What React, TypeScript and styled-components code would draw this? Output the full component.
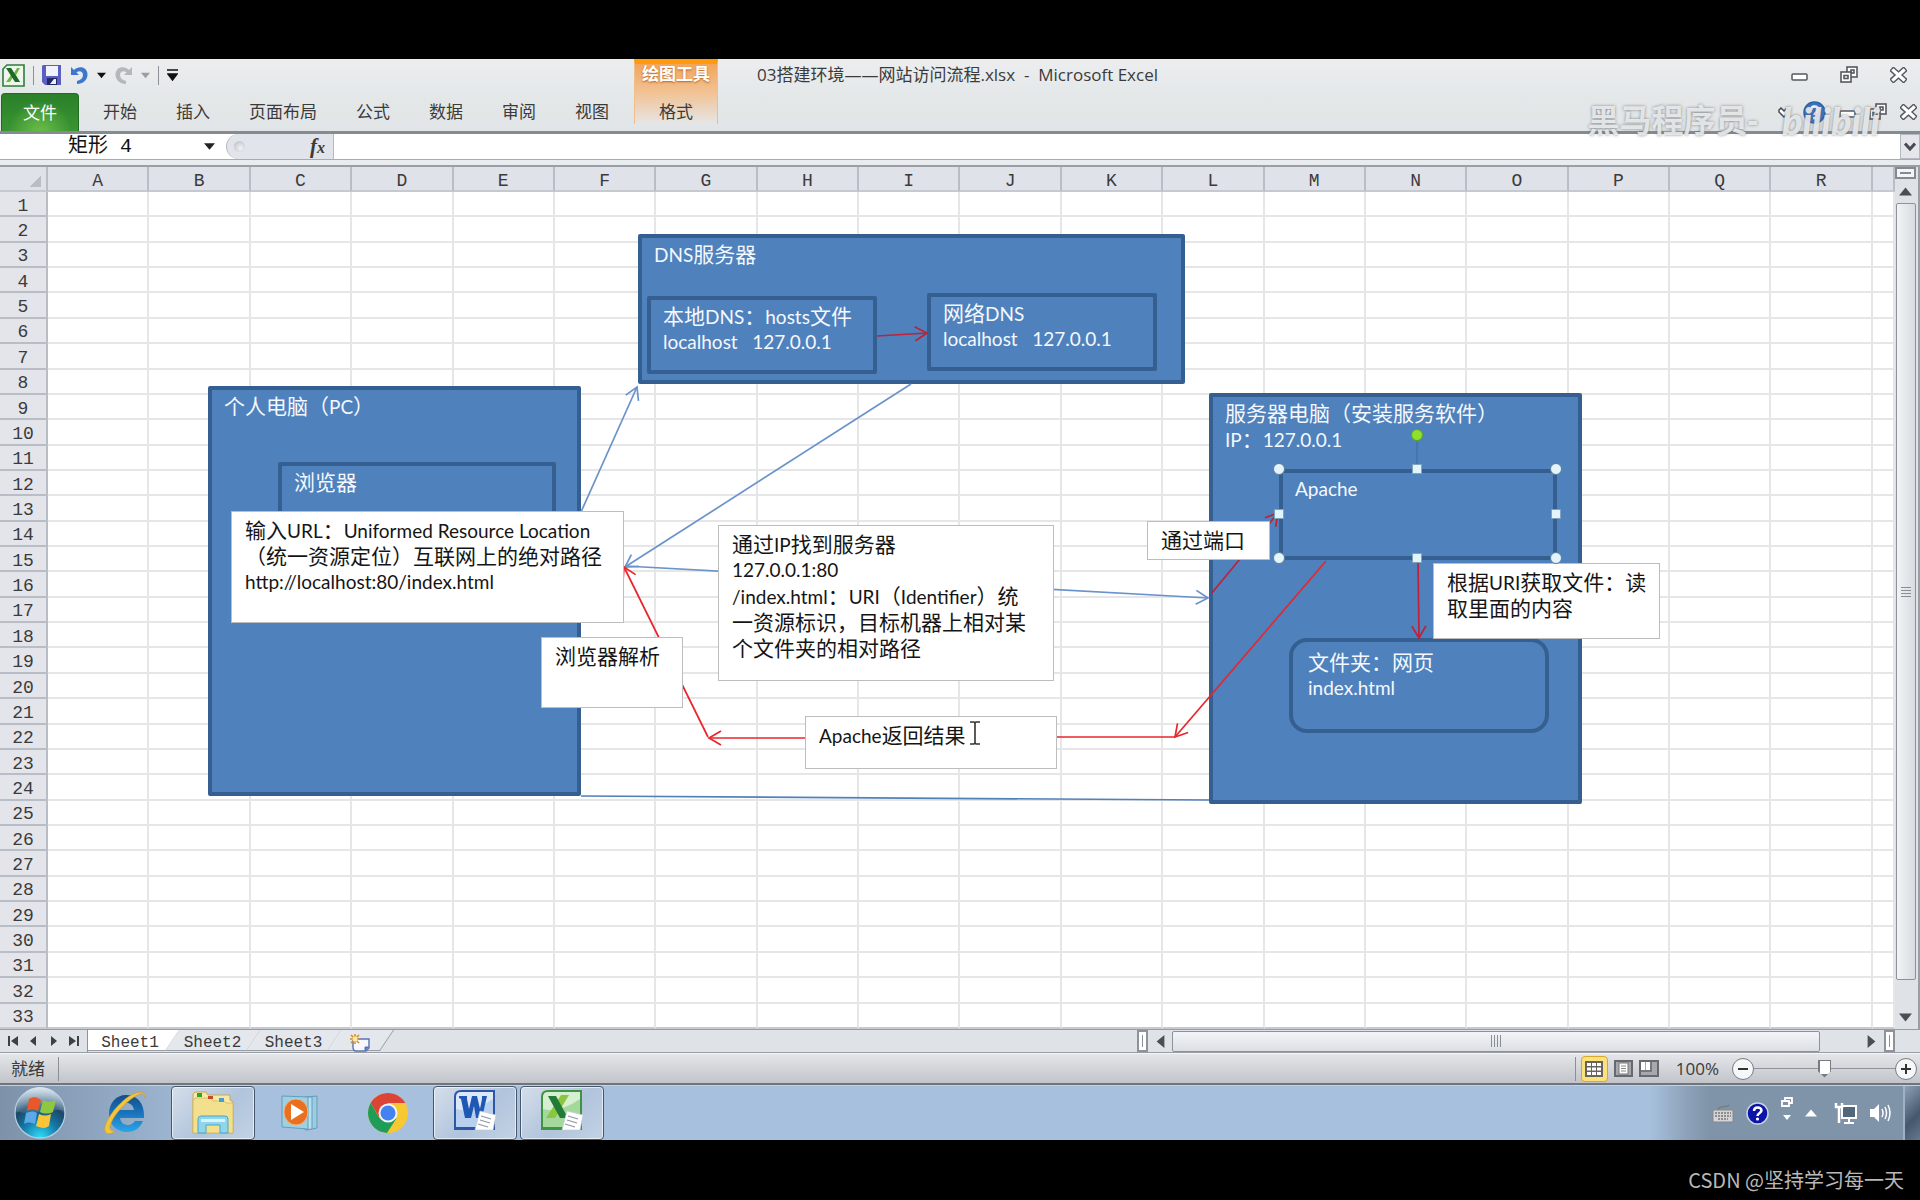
import React from "react";
import styled, { createGlobalStyle, css } from "styled-components";

const uiFont = '"Open Sans", "Noto Sans CJK SC", sans-serif';
const shapeFont = 'Lato, "Noto Sans CJK SC", sans-serif';
const cellFont = '"Liberation Mono", "Noto Sans CJK SC", monospace';

const GlobalStyle = createGlobalStyle`
  * { box-sizing: border-box; }
  body { margin: 0; background: #000; }
  button, input { font: inherit; color: inherit; margin: 0; padding: 0; border: 0; background: none; }
  svg { display: block; flex: none; }
`;

const Screen = styled.div`
  display: flex;
  flex-direction: column;
  min-height: 100vh;
  padding-top: 59px;
  background: #000;
  font-family: ${uiFont};
  font-size: 17px;
  line-height: 24px;
  color: #3b3b3b;
`;

/* ---------- ribbon ---------- */

const Ribbon = styled.header`
  position: relative;
  display: grid;
  grid-template-columns: 634px 84px 1fr;
  grid-template-rows: 34px 38px;
  background: linear-gradient(#ecedef, #e3e7e8 60%, #e2e5e7);
  border-bottom: 3px solid #858b91;
`;

const QuickAccess = styled.div`
  display: flex;
  align-items: center;
  gap: 8px;
  padding: 0 0 2px 2px;
`;

const IconButton = styled.button`
  display: flex;
  align-items: center;
  justify-content: center;
  gap: 8px;
`;

const Divider = styled.span<{ $height: number }>`
  width: 1px;
  height: ${(p) => p.$height}px;
  background: #8c9096;
`;

const TabRow = styled.nav`
  grid-row: 2;
  display: flex;
  align-items: stretch;
  gap: 39px;
  padding-left: 1px;
`;

const Tab = styled.button`
  white-space: nowrap;
`;

const FileTab = styled(Tab)`
  width: 78px;
  margin-right: -15px;
  color: #fff;
  border: 1px solid #1f6b22;
  border-bottom: 0;
  border-radius: 4px 4px 0 0;
  background: radial-gradient(ellipse at 50% 110%, #6cc04a, transparent 60%), linear-gradient(#2b8029, #3a9432);
`;

const ContextTab = styled.div`
  grid-column: 2;
  grid-row: 1 / 3;
  display: flex;
  flex-direction: column;
  align-items: center;
  justify-content: space-between;
  height: 65px;
  border-top: 5px solid #ff9a0c;
  border-left: 1px solid #f0bd8c;
  border-right: 1px solid #f0bd8c;
  background: linear-gradient(#f2a55c, #f1c497 50%, #e5e6e6);
`;

const ContextTitle = styled.span`
  line-height: 20px;
  font-weight: 700;
  color: #fff;
  text-shadow: 0 1px 2px #b5651d;
`;

const TitleBar = styled.div`
  display: flex;
  align-items: center;
  justify-content: space-between;
  padding: 0 13px 2px 39px;
`;

const Title = styled.h1`
  margin: 0;
  font-size: 17px;
  font-weight: 400;
  white-space: pre;
`;

const WindowButtons = styled.div<{ $gap: number }>`
  display: flex;
  align-items: center;
  gap: ${(p) => p.$gap}px;
`;

const DocButtons = styled(WindowButtons)`
  grid-column: 3;
  justify-content: flex-end;
  padding: 0 3px 0 0;
`;

const Watermark = styled.div`
  position: absolute;
  right: 40px;
  top: 36px;
  display: flex;
  align-items: center;
  gap: 24px;
  font-size: 32px;
  line-height: 50px;
  font-weight: 700;
  color: rgba(238, 240, 241, 0.88);
  text-shadow: 0 0 3px rgba(90, 95, 100, 0.75);
  pointer-events: none;
`;

const WatermarkBrand = styled.span`
  font-family: Lato, sans-serif;
  font-size: 38px;
  font-weight: 900;
  font-style: italic;
`;

/* ---------- formula bar ---------- */

const FormulaBar = styled.div`
  display: flex;
  height: 26px;
  background: #fff;
  border-bottom: 1px solid #a5abb3;
`;

const NameBox = styled.input`
  width: 204px;
  padding-left: 68px;
  font-family: ${cellFont};
  font-size: 20px;
  color: #111;
`;

const FxArea = styled.div`
  display: flex;
  align-items: center;
  justify-content: space-between;
  width: 108px;
  padding: 0 8px 0 7px;
  border: 1px solid #b4b9c1;
  border-top: 0;
  border-bottom: 0;
  border-radius: 13px 0 0 13px;
  background: #e1e4ea;
`;

const FxKnob = styled.span`
  width: 11px;
  height: 11px;
  border-radius: 50%;
  background: radial-gradient(circle at 60% 65%, #f2f3f5, #b4b9c0);
`;

const FxButton = styled.button`
  font-family: "Liberation Serif", serif;
  font-size: 21px;
  font-style: italic;
  font-weight: 700;
  line-height: 22px;

  small { font-size: 16px; }
`;

const NameArrow = styled.button`
  width: 22px;
`;

const FormulaInput = styled.input`
  flex: 1;
  min-width: 0;
`;

const ExpandButton = styled(IconButton)`
  width: 20px;
  border: 1px solid #b4b9c1;
  background: #e4e6ea;
`;

const Strip = styled.div`
  height: 7px;
  background: #e9ecef;
  border-bottom: 2px solid #9a9fa6;
`;

/* ---------- sheet ---------- */

const SheetArea = styled.main`
  position: relative;
  flex: 1;
  display: flex;
  min-height: 862px;
  background: #fff;
`;

const GridPane = styled.div`
  position: relative;
  flex: 1;
  min-width: 0;
  overflow: hidden;
`;

const Grid = styled.table`
  width: 100%;
  height: 100%;
  table-layout: fixed;
  border-collapse: separate;
  border-spacing: 0;
  font-family: ${cellFont};
  font-size: 18px;
  line-height: 18px;

  th, td { padding: 0; border: 0 solid #e6e6e9; border-width: 0 2px 2px 0; }
  tr:last-child > td, tr:last-child > th { border-bottom-color: #c6c9cf; }
`;

const HeadCell = styled.th<{ $w?: number }>`
  ${(p) => p.$w && css`width: ${p.$w}px;`}
  height: 25px;
  font-weight: 400;
  background: #dfe2e9;

  && { padding-top: 4px; border-color: #b9bdc6; }
`;

const RowHead = styled.th`
  font-weight: 400;
  background: #e3e5ea;

  && { padding-top: 4px; border-color: #b9bdc6; }
`;

const Corner = styled.span`
  display: block;
  width: 11px;
  height: 12px;
  margin-left: 30px;
  background: linear-gradient(135deg, transparent 50%, #b9bdc4 50%);
`;

/* Drawing layer: free canvas, shapes are placed by their own coordinates. */
const place = css<{ $x: number; $y: number; $w: number; $h: number }>`
  position: absolute;
  left: ${(p) => p.$x}px;
  top: ${(p) => p.$y}px;
  width: ${(p) => p.$w}px;
  height: ${(p) => p.$h}px;
`;

const Canvas = styled.div`
  position: absolute;
  left: 0;
  top: 0;
  font-family: ${shapeFont};
  font-size: 21px;
  line-height: 26px;
`;

const BlueShape = styled.div<{ $x: number; $y: number; $w: number; $h: number; $round?: boolean }>`
  ${place}
  padding: ${(p) => (p.$round ? "7px 15px" : "3px 12px")};
  border: 4px solid #355f91;
  border-radius: ${(p) => (p.$round ? 18 : 2)}px;
  background: #4f81bd;
  color: #f4f8fc;
  white-space: pre;
`;

const Note = styled.div<{ $x: number; $y: number; $w: number; $h: number }>`
  ${place}
  padding: 5px 13px;
  border: 1px solid #bdbdbd;
  background: #fff;
  color: #151515;
  white-space: pre;
`;

const TextLine = styled.div`
  display: flex;
  align-items: baseline;
  height: 26px;
`;

const Latin = styled.span`
  font-size: 19px;
`;

const CanvasLines = styled.svg`
  position: absolute;
  left: 0;
  top: 0;
  pointer-events: none;
`;

const VScroll = styled.div`
  display: flex;
  flex-direction: column;
  align-items: center;
  width: 25px;
  padding-right: 2px;
  border-right: 2px solid #9a9fa6;
  background: #dfe2e6;
`;

const SplitBox = styled.button`
  width: 21px;
  height: 12px;
  border: 2px solid #858a91;
  background: linear-gradient(#858a91, #858a91) center / 11px 2px no-repeat #f4f5f7;
`;

const ArrowButton = styled(IconButton)`
  height: 24px;
`;

const VThumb = styled.div`
  flex: 1;
  display: flex;
  align-items: center;
  justify-content: center;
  width: 20px;
  margin-bottom: 25px;
  border: 1px solid #8e939b;
  border-radius: 2px;
  background: linear-gradient(90deg, #f1f3f5, #d8dbe0);
`;

/* ---------- sheet tabs ---------- */

const SheetBar = styled.div`
  display: flex;
  height: 24px;
  border-top: 1px solid #989da5;
  border-bottom: 1px solid #989da5;
  background: #dfe3e7;
`;

const NavButtons = styled.div`
  display: flex;
  align-items: center;
  justify-content: space-between;
  width: 88px;
  padding: 0 7px;
  border-right: 1px solid #8e939b;
`;

const SheetTabs = styled.div`
  flex: 1;
  display: flex;
  overflow: hidden;
`;

const SheetTab = styled.button<{ $active?: boolean; $w: number }>`
  position: relative;
  z-index: 0;
  display: flex;
  align-items: center;
  justify-content: center;
  width: ${(p) => p.$w}px;
  padding-top: 3px;
  font-family: ${cellFont};
  font-size: 16px;

  &::before {
    content: "";
    position: absolute;
    z-index: -1;
    inset: 0 -1px 1px ${(p) => (p.$active ? -12 : 0)}px;
    transform: skewX(-34deg);
    border-right: 1px solid #989da5;
    border-bottom: 1px solid #989da5;
    background: ${(p) => (p.$active ? "#fff" : "#e4e7eb")};
  }
`;

const HScroll = styled.div`
  display: flex;
  align-items: center;
  width: 758px;
  margin-right: 25px;
`;

const HSplit = styled.span`
  width: 11px;
  height: 22px;
  border: 2px solid #8e939b;
  background: linear-gradient(#8e939b, #8e939b) center / 1px 12px no-repeat #fff;
`;

const HThumb = styled.div`
  display: flex;
  align-items: center;
  justify-content: center;
  width: 648px;
  height: 21px;
  border: 1px solid #8e939b;
  border-radius: 2px;
  background: linear-gradient(#f2f4f7, #dcdfe4);
`;

const HArrow = styled(IconButton)<{ $w: number; $end?: boolean }>`
  width: ${(p) => p.$w}px;
  ${(p) => p.$end && css`
    justify-content: flex-end;
    padding-right: 6px;
  `}
`;

/* ---------- status bar ---------- */

const StatusBar = styled.footer`
  display: flex;
  align-items: center;
  justify-content: space-between;
  height: 32px;
  padding: 0 3px 0 11px;
  border-top: 1px solid #f5f6f7;
  border-bottom: 2px solid #70757c;
  background: linear-gradient(#e4e6e9, #c1c4ca);
`;

const StatusGroup = styled.div`
  display: flex;
  align-items: center;
  gap: 13px;
`;

const ViewTools = styled.div`
  display: flex;
  align-items: center;
  gap: 5px;
  margin-right: 3px;
`;

const ViewButton = styled(IconButton)<{ $active?: boolean }>`
  width: ${(p) => (p.$active ? 27 : 21)}px;
  height: 26px;
  border-radius: 4px;
  ${(p) => p.$active && css`
    border: 1px solid #d9a62e;
    background: #fce27a;
  `}
`;

const Zoom = styled.div`
  display: flex;
  align-items: center;
`;

const ZoomButton = styled(IconButton)`
  width: 22px;
  height: 22px;
  border: 1px solid #777c83;
  border-radius: 50%;
  background: #f6f7f8;
`;

const ZoomSlider = styled.input`
  appearance: none;
  width: 141px;
  height: 22px;
  background: linear-gradient(#8f949b, #8f949b) center / 100% 1px no-repeat;

  &::-webkit-slider-thumb {
    appearance: none;
    width: 13px;
    height: 18px;
    background: linear-gradient(#fff, #fff) center 1px / 10px 13px no-repeat #777c83;
    clip-path: polygon(0 0, 100% 0, 100% 65%, 50% 100%, 0 65%);
  }
`;

/* ---------- taskbar ---------- */

const Taskbar = styled.div`
  display: flex;
  justify-content: space-between;
  height: 55px;
  border-top: 1px solid #c3d2e3;
  background:
    linear-gradient(90deg, rgba(112, 130, 152, 0.75), transparent 230px),
    linear-gradient(270deg, #7f93a9 210px, #8b9fb6 230px, transparent 270px),
    #a6c0dd;
`;

const TaskList = styled.div`
  display: flex;
  align-items: center;
  padding-left: 2px;
  gap: 3px;
`;

const TaskButton = styled(IconButton)<{ $w: number; $open?: boolean }>`
  width: ${(p) => p.$w}px;
  height: 54px;
  ${(p) => p.$open && css`
    border: 1px solid #47566a;
    border-radius: 4px;
    box-shadow: inset 0 0 0 1px rgba(255, 255, 255, 0.6);
    background: linear-gradient(135deg, #d5deea, #b0c4dc 55%, #c4d2e4);
  `}
`;

const Tray = styled.div`
  display: flex;
  align-items: center;
  gap: 12px;
`;

const TrayGroup = styled.div`
  display: flex;
  align-items: center;
  gap: 11px;
  margin-left: 5px;
`;

const ShowDesktop = styled.button`
  width: 17px;
  height: 54px;
  border-left: 2px solid #9fb1c5;
  background: linear-gradient(135deg, #8ea0b5, #44576d 60%, #64788f);
`;

const Credit = styled.div`
  display: flex;
  align-items: center;
  justify-content: flex-end;
  height: 60px;
  padding: 20px 16px 0 0;
  font-family: "Noto Sans CJK SC", sans-serif;
  font-size: 20px;
  color: #b9b9b9;
`;

/* ---------- small drawings ---------- */

const Triangle = ({ dir, size = 10, color = "#4a4e55" }: { dir: "up" | "down" | "left" | "right"; size?: number; color?: string }) => {
  const d = { up: "M0 8L5 2L10 8Z", down: "M0 2L5 8L10 2Z", left: "M8 0L2 5L8 10Z", right: "M2 0L8 5L2 10Z" }[dir];
  return <svg width={size} height={size} viewBox="0 0 10 10"><path d={d} fill={color} /></svg>;
};

const NavIcon = ({ d }: { d: string }) => (
  <svg width="12" height="12" viewBox="0 0 12 12"><path d={d} fill="#3c4047" /></svg>
);

const Minimize = () => (
  <svg width="17" height="18" viewBox="0 0 17 18"><rect x="1" y="8" width="15" height="6" rx="1" fill="#fff" stroke="#55595f" strokeWidth="1.5" /></svg>
);
const Restore = () => (
  <svg width="18" height="18" viewBox="0 0 18 18" fill="#fff" stroke="#55595f" strokeWidth="1.6">
    <rect x="7" y="1" width="10" height="10" /><rect x="11" y="4" width="3" height="3" /><rect x="1" y="6" width="10" height="10" /><rect x="4" y="9.500" width="4" height="3" />
  </svg>
);
const Close = () => (
  <svg width="17" height="16" viewBox="0 0 17 16">
    <path d="M3.500 3.500L13.500 12.500M13.500 3.500L3.500 12.500" stroke="#55595f" strokeWidth="6" strokeLinecap="square" />
    <path d="M3.500 3.500L13.500 12.500M13.500 3.500L3.500 12.500" stroke="#fff" strokeWidth="3.200" strokeLinecap="square" />
  </svg>
);

const Grip = ({ vertical }: { vertical?: boolean }) => (
  <svg width="12" height="12" viewBox="0 0 12 12">
    <path d={vertical ? "M1 1.500H11M1 4.500H11M1 7.500H11M1 10.500H11" : "M1.500 0V12M4.500 0V12M7.500 0V12M10.500 0V12"} stroke="#8a8f97" />
  </svg>
);

const ExcelSmall = () => (
  <svg width="23" height="23" viewBox="0 0 23 23">
    <path d="M5 1H22V22H1V5Z" fill="#eef6ee" stroke="#2f7d3b" strokeWidth="1.600" />
    <path d="M5 4H9L12 9L15 4H18L14 11L18 18H14L11 13L8 18H4L9 11Z" fill="#6fb83f" />
    <path d="M4 4H9L18 18H13Z" fill="#1e6a2a" />
  </svg>
);
const SaveIcon = () => (
  <svg width="20" height="20" viewBox="0 0 20 20">
    <path d="M1 0H19V20H3L0 17V1Z" fill="#5a5fc0" /><rect x="4" y="1" width="12" height="10" fill="#f0f3fb" />
    <rect x="5" y="13" width="10" height="7" fill="#242a68" /><path d="M8 19L12 14H14V19Z" fill="#eef" />
  </svg>
);
const ArrowBack = ({ color, flip }: { color: string; flip?: boolean }) => (
  <svg width="19" height="20" viewBox="0 0 19 20">
    <g transform={flip ? "translate(19 0) scale(-1 1)" : undefined}>
      <path d="M1 2V10H9L6.500 7.500C9 5 13 6 13 10C13 13 11 15 7 16V19C13 19 17.500 15 17.500 9.500C17.500 2 9 0 4 5Z" fill={color} />
    </g>
  </svg>
);
const CustomizeIcon = () => (
  <svg width="11" height="12" viewBox="0 0 11 12"><path d="M0 1H11M1 5H10L5.500 11Z" stroke="#111" strokeWidth="1.500" fill="#111" /></svg>
);
const HelpIcon = ({ dark }: { dark?: boolean }) => (
  <svg width="23" height="23" viewBox="0 0 23 23">
    <circle cx="11.500" cy="11.500" r="10.500" fill={dark ? "#0b16a8" : "#3b74c4"} stroke={dark ? "#c9d3e6" : "#2d62ad"} strokeWidth="1.500" />
    <path d="M8 9C8 4 15.500 4.500 15.500 8.500C15.500 11 11.500 11 11.500 14" fill="none" stroke="#fff" strokeWidth="2.500" />
    <circle cx="11.500" cy="17" r="1.600" fill="#fff" />
  </svg>
);
const Chevron = () => (
  <svg width="12" height="10" viewBox="0 0 12 10"><path d="M1 1.500L6 7L11 1.500" fill="none" stroke="#484c52" strokeWidth="3" /></svg>
);
const HeartChevron = () => (
  <svg width="12" height="11" viewBox="0 0 12 11"><path d="M1 3L3 1L6 4L9 1L11 3V5L6 10L1 5Z" fill="#fff" stroke="#484c52" strokeWidth="1.500" /></svg>
);
const NewSheetIcon = () => (
  <svg width="22" height="18" viewBox="0 0 22 18">
    <path d="M4 5H20V14L17 17H7C5 17 4 15 4 13Z" fill="#f5f8fe" stroke="#5d72b0" strokeWidth="1.400" />
    <path d="M20 13L16 13V17" fill="#5d72b0" stroke="#5d72b0" />
    <path d="M6 0V10M1 5H11M2 1L10 9M10 1L2 9" stroke="#d98a1c" strokeWidth="1.500" /><circle cx="6" cy="5" r="2.500" fill="#ffe9a8" />
  </svg>
);

const NormalView = () => (
  <svg width="18" height="16" viewBox="0 0 18 16"><rect width="18" height="16" fill="#66645c" /><path d="M2 2h4v3H2zM7 2h4v3H7zM12 2h4v3h-4zM2 6.500h4v3H2zM7 6.500h4v3H7zM12 6.500h4v3h-4zM2 11h4v3H2zM7 11h4v3H7zM12 11h4v3h-4z" fill="#fff" /></svg>
);
const LayoutView = () => (
  <svg width="19" height="17" viewBox="0 0 19 17"><rect x="1" y="1" width="17" height="15" fill="#a5a8ad" stroke="#66696f" strokeWidth="2" /><rect x="5" y="3" width="9" height="11" fill="#fff" stroke="#777" /><path d="M7 6H12M7 8.500H12M7 11H12" stroke="#888" /></svg>
);
const BreakView = () => (
  <svg width="20" height="17" viewBox="0 0 20 17"><rect x="1" y="1" width="18" height="15" fill="#a5a8ad" stroke="#66696f" strokeWidth="2" /><path d="M2 2H6V10H2ZM7 2H11V10H7Z" fill="#fff" /><path d="M2 11H12V2" fill="none" stroke="#66696f" strokeWidth="1.500" /></svg>
);

const StartOrb = () => (
  <svg width="52" height="52" viewBox="0 0 52 52">
    <defs>
      <radialGradient id="orb" cx="50%" cy="100%" r="95%"><stop offset="0" stopColor="#2fe0fb" /><stop offset=".4" stopColor="#1478a8" /><stop offset=".7" stopColor="#1c4766" /><stop offset="1" stopColor="#a9c0d2" /></radialGradient>
      <linearGradient id="gloss" x1="0" y1="0" x2="0" y2="1"><stop offset="0" stopColor="#e3ecf4" stopOpacity=".85" /><stop offset="1" stopColor="#7f9db5" stopOpacity=".25" /></linearGradient>
    </defs>
    <circle cx="26" cy="26" r="25" fill="url(#orb)" stroke="#b5cbdc" strokeWidth="1.300" />
    <path d="M2 24A24 24 0 0 1 50 24C38 20 14 30 2 24Z" fill="url(#gloss)" />
    <path d="M15 12C19 9 24 10 27 13L24 24C20 22 17 22 13 24Z" fill="#e8582a" />
    <path d="M29 13C33 15 37 15 42 13L39 25C35 27 30 27 26 25Z" fill="#8fc743" />
    <path d="M12 26C16 24 20 24 23 26L21 37C17 35 13 35 10 37Z" fill="#5aa9e8" />
    <path d="M25 27C29 29 33 29 37 27L35 39C31 42 27 41 22 39Z" fill="#fbc437" />
  </svg>
);
const IEIcon = () => (
  <svg width="46" height="46" viewBox="0 0 46 46">
    <defs><linearGradient id="ie" x1="0" y1="0" x2="0" y2="1"><stop offset="0" stopColor="#154d84" /><stop offset=".5" stopColor="#1a74bd" /><stop offset="1" stopColor="#2ba5e8" /></linearGradient></defs>
    <path fillRule="evenodd" d="M24 5C35 5 42 13 42 25V28H18C19 33 22 35 26 35C29 35 32 33 33 31H41C38 38 33 42 25 42C14 42 7 34 7 24C7 13 14 5 24 5ZM18 20H32C31 15 28 13 25 13C21 13 18 16 18 20Z" fill="url(#ie)" />
    <path d="M43 8C45 1 36 0 26 7C13 16 1 34 3 41C4 46 11 43 14 41C8 42 6 38 10 31C16 19 31 6 38 4C42 3 43 5 43 8Z" fill="#f2c53d" stroke="#d29a1e" strokeWidth=".6" />
  </svg>
);
const FolderIcon = () => (
  <svg width="46" height="44" viewBox="0 0 46 44">
    <path d="M3 3L5 1H16L18 4H40V9L43 11V42H3Z" fill="#f6e9a8" stroke="#c8a94c" />
    <path d="M3 10L5 7H20L23 10H34L36 12H43V42H3Z" fill="#f2e08e" stroke="#d2b65c" strokeWidth=".8" />
    <rect x="7" y="2" width="5" height="4" fill="#2ba52d" /><rect x="18" y="5" width="5" height="3" fill="#c74a2b" /><rect x="29" y="7" width="5" height="4" fill="#3fa0d8" />
    <path d="M8 42V28Q8 25 11 25H35Q38 25 38 28V42H30V34H16V42Z" fill="#8fd5ec" stroke="#4ca6c6" />
    <path d="M11 28H35V31H11Z" fill="#d7f3fb" />
  </svg>
);
const MediaIcon = () => (
  <svg width="38" height="38" viewBox="0 0 38 38">
    <path d="M26 3L36 2V34L26 36Z" fill="#9ecbe0" stroke="#5f9fbd" /><path d="M24 3L31 3V35L24 36Z" fill="#b9deec" stroke="#5f9fbd" />
    <path d="M1 2L27 3V35L1 33Z" fill="#9fcfe3" stroke="#5f9fbd" />
    <ellipse cx="15" cy="18" rx="12" ry="13" fill="#e8701f" stroke="#f6b27a" /><path d="M10 10L23 18L10 26Z" fill="#fff" />
  </svg>
);
const ChromeIcon = () => (
  <svg width="42" height="42" viewBox="0 0 42 42">
    <circle cx="21" cy="21" r="20" fill="#f8c832" />
    <path d="M21 21L12.500 26L3.700 11A20 20 0 0 1 38.300 11H21Z" fill="#dc4437" />
    <path d="M12.300 26L3.700 11A20 20 0 0 0 20 41L29.700 26L21 30Z" fill="#1f9d58" />
    <circle cx="21" cy="21" r="9.500" fill="#f2f2f2" /><circle cx="21" cy="21" r="7.500" fill="#4382f0" />
  </svg>
);
const OfficeIcon = ({ kind }: { kind: "word" | "excel" }) => {
  const word = kind === "word";
  const c = word ? "#2c57a6" : "#3f9443";
  return (
    <svg width="44" height="48" viewBox="0 0 44 48">
      <path d="M8 1H42V41H1V8Q1 1 8 1Z" fill={c} />
      <path d="M8 3H40V38H3V8Q3 3 8 3Z" fill={word ? "#dce8f8" : "#d5efd0"} />
      <path d="M3 20Q20 24 40 10V38H3Z" fill={word ? "#b9cfee" : "#a4d99d"} />
      {word ? (
        <path d="M6 7H14V10L16 20L19 7H24L27 20L29 10V7H34L29 29H23L21 17L18 29H12L8 10L6 9Z" fill="#1f57b5" />
      ) : (
        <g><path d="M21 6H29L15 29H6Z" fill="#8cc63f" /><path d="M8 7H16L28 29H20Z" fill="#217a35" /></g>
      )}
      <path d="M27 22L43 26L40 41H22Z" fill="#fff" stroke="#c4cbd6" strokeWidth=".7" />
      <path d="M28 27L38 30M27 31L37 34M25 35L35 38" stroke="#8d97a8" strokeWidth="1.200" />
    </svg>
  );
};

const KeyboardIcon = () => (
  <svg width="22" height="19" viewBox="0 0 22 19"><path d="M6 6C8 0 13 5 17 1" fill="none" stroke="#777e87" strokeWidth="1.500" /><rect x="1" y="6" width="20" height="12" rx="1" fill="#d3d4d3" stroke="#85888c" /><path d="M3 9H19M3 12H19M6 15H16" stroke="#777" strokeWidth="1.500" strokeDasharray="2 1" /></svg>
);
const LanguageControls = () => (
  <svg width="12" height="32" viewBox="0 0 12 32"><path d="M4 3V1H11V6H8M1 4H8V9H1Z" fill="none" stroke="#fff" strokeWidth="1.800" /><path d="M2 18H10L6 23Z" fill="#fff" /></svg>
);
const NetworkIcon = () => (
  <svg width="24" height="24" viewBox="0 0 24 24"><rect x="8" y="5" width="14" height="12" fill="#546779" stroke="#fff" strokeWidth="2" /><path d="M15 17V21M10 22H20" stroke="#fff" strokeWidth="2" /><path d="M2 2V6H8V2M5 6V22" stroke="#fff" strokeWidth="2.500" fill="none" /></svg>
);
const SpeakerIcon = () => (
  <svg width="22" height="22" viewBox="0 0 22 22"><path d="M1 7H5L10 2V20L5 15H1Z" fill="#fff" /><path d="M13 7Q15 11 13 15M16 5Q19 11 16 17M19 3Q23 11 19 19" fill="none" stroke="#fff" strokeWidth="1.500" /></svg>
);

/* ---------- content ---------- */

/* Latin runs are set smaller than the Chinese glyphs around them. */
const Lines = ({ text }: { text: string }) => (
  <>
    {text.split("\n").map((line, i) => (
      <TextLine key={i}>
        {line.split(/([\x20-\x7e]+)/).filter(Boolean).map((run, j) =>
          /^[\x20-\x7e]/.test(run) ? <Latin key={j}>{run}</Latin> : <span key={j}>{run}</span>
        )}
      </TextLine>
    ))}
  </>
);

type Item = { x: number; y: number; w: number; h: number; text: string; round?: boolean };

const shapes: Item[] = [
  { x: 638, y: 67, w: 547, h: 150, text: "DNS服务器" },
  { x: 647, y: 129, w: 230, h: 78, text: "本地DNS：hosts文件\nlocalhost   127.0.0.1" },
  { x: 927, y: 126, w: 230, h: 78, text: "网络DNS\nlocalhost   127.0.0.1" },
  { x: 208, y: 219, w: 373, h: 410, text: "个人电脑（PC）" },
  { x: 278, y: 295, w: 278, h: 120, text: "浏览器" },
  { x: 1209, y: 226, w: 373, h: 411, text: "服务器电脑（安装服务软件）\nIP：127.0.0.1" },
  { x: 1279, y: 302, w: 278, h: 91, text: "Apache" },
  { x: 1289, y: 471, w: 260, h: 95, text: "文件夹：网页\nindex.html", round: true },
];

const notes: Item[] = [
  { x: 231, y: 344, w: 393, h: 112, text: "输入URL：Uniformed Resource Location\n（统一资源定位）互联网上的绝对路径\nhttp://localhost:80/index.html" },
  { x: 541, y: 470, w: 142, h: 71, text: "浏览器解析" },
  { x: 718, y: 358, w: 336, h: 156, text: "通过IP找到服务器\n127.0.0.1:80\n/index.html：URI（Identifier）统\n一资源标识，目标机器上相对某\n个文件夹的相对路径" },
  { x: 805, y: 549, w: 252, h: 53, text: "Apache返回结果" },
  { x: 1147, y: 354, w: 123, h: 39, text: "通过端口" },
  { x: 1433, y: 396, w: 227, h: 76, text: "根据URI获取文件：读\n取里面的内容" },
];

const blue = "#6a93cb";
const red = "#e8262b";
const darkRed = "#bf2136";

const arrows: [number, number, number, number, string, boolean][] = [
  [581, 345, 637, 220, blue, true],
  [911, 217, 625, 400, blue, true],
  [625, 399, 1208, 431, blue, true],
  [581, 629, 1209, 633, "#5280bb", false],
  [877, 169, 927, 166, darkRed, true],
  [1211, 427, 1278, 346, darkRed, true],
  [1326, 394, 1175, 570, red, true],
  [1175, 570, 1057, 570, red, false],
  [805, 571, 709, 571, red, true],
  [708, 570, 624, 400, red, true],
  [1418, 394, 1419, 471, darkRed, true],
];

const Arrow = ({ a }: { a: (typeof arrows)[number] }) => {
  const [x1, y1, x2, y2, color, head] = a;
  const angle = (Math.atan2(y2 - y1, x2 - x1) * 180) / Math.PI;
  return (
    <g stroke={color} strokeWidth="1.700" fill="none">
      <path d={`M${x1} ${y1}L${x2} ${y2}`} />
      {head && <path d="M-12 -7L0 0L-12 7" transform={`translate(${x2} ${y2}) rotate(${angle})`} />}
    </g>
  );
};

const columns = "ABCDEFGHIJKLMNOPQR".split("");
const rows = Array.from({ length: 33 }, (_, i) => i + 1);
const corners = [[1279, 302], [1556, 302], [1279, 391], [1556, 391]];
const mids = [[1417, 302], [1417, 391], [1279, 347], [1556, 347]];

export default function App() {
  return (
    <Screen lang="zh-CN">
      <GlobalStyle />
      <Ribbon>
        <QuickAccess>
          <ExcelSmall />
          <Divider $height={19} />
          <IconButton aria-label="保存"><SaveIcon /></IconButton>
          <IconButton aria-label="撤消"><ArrowBack color="#3d78cc" /><Triangle dir="down" size={9} color="#111" /></IconButton>
          <IconButton aria-label="恢复"><ArrowBack color="#b4b8bd" flip /><Triangle dir="down" size={9} color="#9a9ea4" /></IconButton>
          <Divider $height={19} />
          <IconButton aria-label="自定义快速访问工具栏"><CustomizeIcon /></IconButton>
        </QuickAccess>
        <TabRow>
          <FileTab>文件</FileTab>
          {["开始", "插入", "页面布局", "公式", "数据", "审阅", "视图"].map((t) => <Tab key={t}>{t}</Tab>)}
        </TabRow>
        <ContextTab>
          <ContextTitle>绘图工具</ContextTitle>
          <Tab>格式</Tab>
        </ContextTab>
        <TitleBar>
          <Title>03搭建环境——网站访问流程.xlsx  -  Microsoft Excel</Title>
          <WindowButtons $gap={32}>
            <IconButton aria-label="最小化"><Minimize /></IconButton>
            <IconButton aria-label="还原"><Restore /></IconButton>
            <IconButton aria-label="关闭"><Close /></IconButton>
          </WindowButtons>
        </TitleBar>
        <DocButtons $gap={13}>
          <IconButton aria-label="折叠功能区"><HeartChevron /></IconButton>
          <IconButton aria-label="帮助"><HelpIcon /></IconButton>
          <IconButton aria-label="最小化窗口"><Minimize /></IconButton>
          <IconButton aria-label="还原窗口"><Restore /></IconButton>
          <IconButton aria-label="关闭窗口"><Close /></IconButton>
        </DocButtons>
        <Watermark><span>黑马程序员-</span><WatermarkBrand>bilibili</WatermarkBrand></Watermark>
      </Ribbon>

      <FormulaBar>
        <NameBox aria-label="名称框" defaultValue="矩形 4" />
        <NameArrow aria-label="名称列表"><Triangle dir="down" size={11} color="#222" /></NameArrow>
        <FxArea><FxKnob /><FxButton aria-label="插入函数">f<small>x</small></FxButton></FxArea>
        <FormulaInput aria-label="编辑栏" />
        <ExpandButton aria-label="展开编辑栏"><Chevron /></ExpandButton>
      </FormulaBar>
      <Strip />

      <SheetArea>
        <GridPane>
          <Grid>
            <thead>
              <tr>
                <HeadCell $w={48}><Corner /></HeadCell>
                {columns.map((c) => <HeadCell key={c} scope="col">{c}</HeadCell>)}
                <HeadCell $w={22} />
              </tr>
            </thead>
            <tbody>
              {rows.map((r) => (
                <tr key={r}>
                  <RowHead scope="row">{r}</RowHead>
                  {columns.map((c) => <td key={c} />)}
                  <td />
                </tr>
              ))}
            </tbody>
          </Grid>
          <Canvas>
            {shapes.map((s) => (
              <BlueShape key={s.text + s.x} $x={s.x} $y={s.y} $w={s.w} $h={s.h} $round={s.round}><Lines text={s.text} /></BlueShape>
            ))}
            <CanvasLines width="1700" height="700" viewBox="0 0 1700 700">
              {arrows.map((a, i) => <Arrow key={i} a={a} />)}
            </CanvasLines>
            {notes.map((n) => (
              <Note key={n.text} $x={n.x} $y={n.y} $w={n.w} $h={n.h}><Lines text={n.text} /></Note>
            ))}
            <CanvasLines width="1700" height="700" viewBox="0 0 1700 700">
              <path d="M1417 275V302" stroke="#3f6ba5" />
              <circle cx="1417" cy="268" r="5.500" fill="#8ee02c" stroke="#5da31f" />
              {corners.map(([x, y]) => <circle key={`${x}-${y}`} cx={x} cy={y} r="5.500" fill="#e3f5fb" stroke="#5d7f9c" />)}
              {mids.map(([x, y]) => <rect key={`${x}-${y}`} x={x - 4.5} y={y - 4.5} width="9" height="9" fill="#e3f5fb" stroke="#7fa3bd" />)}
              <path d="M970 555H974L975 556L976 555H980M975 556V576M970 577H974L975 576L976 577H980" fill="none" stroke="#333" strokeWidth="1.600" />
            </CanvasLines>
          </Canvas>
        </GridPane>
        <VScroll>
          <SplitBox aria-label="拆分" />
          <ArrowButton aria-label="向上滚动"><Triangle dir="up" size={13} /></ArrowButton>
          <VThumb><Grip vertical /></VThumb>
          <ArrowButton aria-label="向下滚动"><Triangle dir="down" size={13} /></ArrowButton>
        </VScroll>
      </SheetArea>

      <SheetBar>
        <NavButtons>
          <IconButton aria-label="第一张"><NavIcon d="M1 1H3V11H1ZM11 1V11L4 6Z" /></IconButton>
          <IconButton aria-label="上一张"><NavIcon d="M9 1V11L3 6Z" /></IconButton>
          <IconButton aria-label="下一张"><NavIcon d="M3 1V11L9 6Z" /></IconButton>
          <IconButton aria-label="最后一张"><NavIcon d="M1 1V11L8 6ZM9 1H11V11H9Z" /></IconButton>
        </NavButtons>
        <SheetTabs>
          <SheetTab $w={84} $active>Sheet1</SheetTab>
          <SheetTab $w={81}>Sheet2</SheetTab>
          <SheetTab $w={81}>Sheet3</SheetTab>
          <SheetTab $w={52} aria-label="插入工作表"><NewSheetIcon /></SheetTab>
        </SheetTabs>
        <HScroll>
          <HSplit />
          <HArrow $w={24} aria-label="向左滚动"><Triangle dir="left" size={13} /></HArrow>
          <HThumb><Grip /></HThumb>
          <HArrow $w={64} $end aria-label="向右滚动"><Triangle dir="right" size={13} /></HArrow>
          <HSplit />
        </HScroll>
      </SheetBar>

      <StatusBar>
        <StatusGroup>就绪<Divider $height={24} /></StatusGroup>
        <StatusGroup>
          <ViewTools>
            <Divider $height={24} />
            <ViewButton $active aria-label="普通"><NormalView /></ViewButton>
            <ViewButton aria-label="页面布局"><LayoutView /></ViewButton>
            <ViewButton aria-label="分页预览"><BreakView /></ViewButton>
          </ViewTools>
          <label htmlFor="zoom">100%</label>
          <Zoom>
            <ZoomButton aria-label="缩小"><svg width="10" height="10"><path d="M0 5H10" stroke="#333" strokeWidth="2" /></svg></ZoomButton>
            <ZoomSlider id="zoom" type="range" min="0" max="200" defaultValue="100" />
            <ZoomButton aria-label="放大"><svg width="10" height="10"><path d="M0 5H10M5 0V10" stroke="#333" strokeWidth="2" /></svg></ZoomButton>
          </Zoom>
        </StatusGroup>
      </StatusBar>

      <Taskbar>
        <TaskList>
          <TaskButton $w={76} aria-label="开始菜单"><StartOrb /></TaskButton>
          <TaskButton $w={87} aria-label="Internet Explorer"><IEIcon /></TaskButton>
          <TaskButton $w={84} $open aria-label="资源管理器"><FolderIcon /></TaskButton>
          <TaskButton $w={84} aria-label="媒体播放器"><MediaIcon /></TaskButton>
          <TaskButton $w={85} aria-label="Chrome"><ChromeIcon /></TaskButton>
          <TaskButton $w={84} $open aria-label="Word"><OfficeIcon kind="word" /></TaskButton>
          <TaskButton $w={84} $open aria-label="Excel"><OfficeIcon kind="excel" /></TaskButton>
        </TaskList>
        <Tray>
          <KeyboardIcon />
          <HelpIcon dark />
          <LanguageControls />
          <Triangle dir="up" size={12} color="#fff" />
          <TrayGroup>
            <NetworkIcon />
            <SpeakerIcon />
          </TrayGroup>
          <ShowDesktop aria-label="显示桌面" />
        </Tray>
      </Taskbar>
      <Credit>CSDN @坚持学习每一天</Credit>
    </Screen>
  );
}
